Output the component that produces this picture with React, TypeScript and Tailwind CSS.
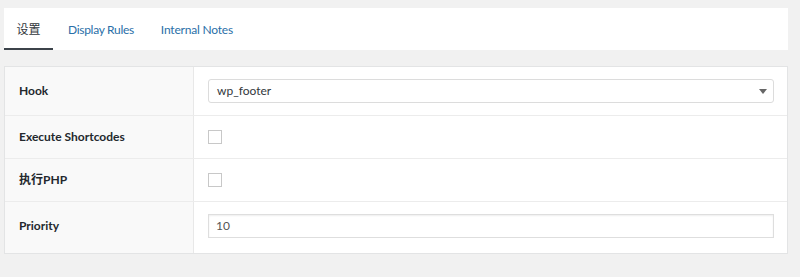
export default function App() {
  const rows = [
    { label: "Hook", kind: "select" },
    { label: "Execute Shortcodes", kind: "check" },
    { label: "执行PHP", kind: "check" },
    { label: "Priority", kind: "input" },
  ];

  return (
    <div
      className="w-[800px] h-[277px] bg-[#f1f1f1] pt-[8px] pl-[4px] pr-[12px] text-[12px] text-[#23282d]"
      style={{ fontFamily: 'Lato, "Noto Sans CJK SC", sans-serif' }}
    >
      {/* Tabs */}
      <div className="flex h-[42px] bg-white">
        <div className="flex w-[49px] items-center justify-center border-b-2 border-[#3c434a] pt-[3px] text-[#32373c]">
          设置
        </div>
        <div className="flex items-center pl-[15px] pt-[1px] tracking-[-0.3px] text-[#2a6fa8]">Display Rules</div>
        <div className="flex items-center pl-[27px] pt-[1px] tracking-[-0.2px] text-[#2a6fa8]">Internal Notes</div>
      </div>

      {/* Settings table */}
      <div className="mt-[16px] border border-[#e3e4e5] bg-white">
        {rows.map((r, i) => {
          const pad = r.kind === "input" ? "pb-[3px]" : "";
          return (
            <div
              key={r.label}
              className={`flex ${i < rows.length - 1 ? "border-b border-[#ececec]" : ""} ${
                r.kind === "select" ? "h-[49px]" : r.kind === "input" ? "h-[51px]" : "h-[43px]"
              }`}
            >
              <div className={`flex w-[189px] shrink-0 items-center border-r border-[#e8e8e8] bg-[#f9f9f9] pl-[14px] font-bold ${pad}`}>
                {r.label}
              </div>
              <div className={`flex flex-1 items-center pl-[14px] pr-[13px] ${pad}`}>
                {r.kind === "select" && (
                  <div className="relative flex h-[24px] w-full items-center rounded-[3px] border border-[#dcdcdc] bg-white pl-[8px] text-[#32373c]">
                    wp_footer
                    <span className="absolute right-[6px] top-[9px] h-0 w-0 border-x-[4px] border-t-[5px] border-x-transparent border-t-[#666]" />
                  </div>
                )}
                {r.kind === "check" && (
                  <div className="h-[14px] w-[14px] border border-[#c8c8c8] bg-white" />
                )}
                {r.kind === "input" && (
                  <div className="flex h-[24px] w-full items-center border border-[#dedede] bg-white pl-[7px] text-[#555] shadow-[inset_0_1px_2px_rgba(0,0,0,0.07)]">
                    10
                  </div>
                )}
              </div>
            </div>
          );
        })}
      </div>
    </div>
  );
}
